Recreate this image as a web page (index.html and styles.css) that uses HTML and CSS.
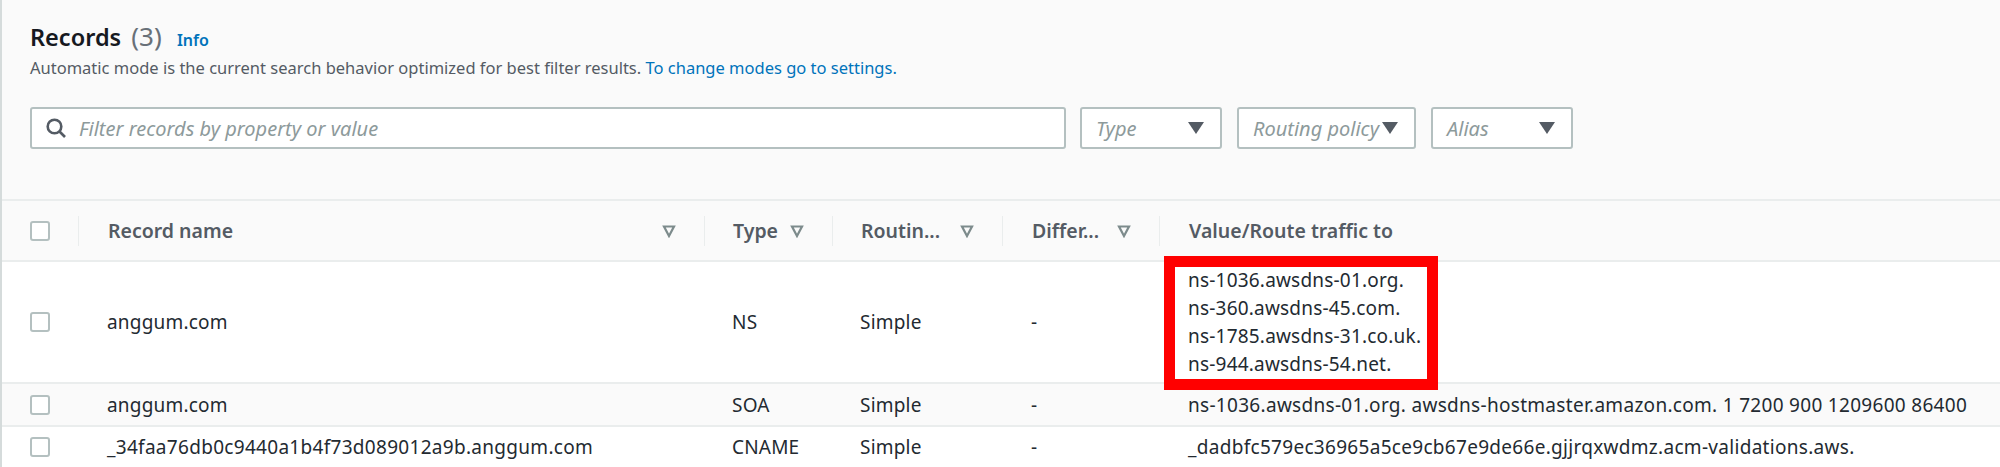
FILE: index.html
```html
<!DOCTYPE html>
<html lang="en">
    <head>
        <meta charset="UTF-8">
        <title>Records</title>
        <link rel="stylesheet" href="styles.css">
    </head>
    <body>
        <div class="panel">
            <div class="panel-top">
                <h2>Records <span class="count">(3)</span> <a class="info" href="#">Info</a></h2>
                <p class="hint">Automatic mode is the current search behavior optimized for best filter results. <a href="#">To change modes go to settings.</a></p>
                <div class="filters">
                    <div class="search">
                        <svg class="search-icon" viewBox="0 0 20 20"><circle cx="8.5" cy="8.5" r="6.8"/><path d="M13.5 13.5l5.5 5.5"/></svg>
                        <span>Filter records by property or value</span>
                    </div>
                    <div class="select select-type"><span>Type</span><i class="caret"></i></div>
                    <div class="select select-routing"><span>Routing policy</span><i class="caret"></i></div>
                    <div class="select select-alias"><span>Alias</span><i class="caret"></i></div>
                </div>
            </div>
            <table>
                <colgroup>
                    <col class="col-check"><col class="col-name"><col class="col-type"><col class="col-routing"><col class="col-diff"><col>
                </colgroup>
                <thead>
                    <tr>
                        <th><span class="check"></span></th>
                        <th><div class="head">Record name<svg class="sort" viewBox="0 0 14 14"><path d="M2 2.5h10L7 12z"/></svg></div></th>
                        <th><div class="head head-tight">Type<svg class="sort" viewBox="0 0 14 14"><path d="M2 2.5h10L7 12z"/></svg></div></th>
                        <th><div class="head head-tight">Routin...<svg class="sort" viewBox="0 0 14 14"><path d="M2 2.5h10L7 12z"/></svg></div></th>
                        <th><div class="head">Differ...<svg class="sort" viewBox="0 0 14 14"><path d="M2 2.5h10L7 12z"/></svg></div></th>
                        <th><div class="head">Value/Route traffic to</div></th>
                    </tr>
                </thead>
                <tbody>
                    <tr class="row-ns">
                        <td><span class="check"></span></td>
                        <td>anggum.com</td>
                        <td class="tight">NS</td>
                        <td class="tight">Simple</td>
                        <td>-</td>
                        <td class="multi">ns-1036.awsdns-01.org.<br>ns-360.awsdns-45.com.<br>ns-1785.awsdns-31.co.uk.<br>ns-944.awsdns-54.net.</td>
                    </tr>
                    <tr class="row-soa">
                        <td><span class="check"></span></td>
                        <td>anggum.com</td>
                        <td class="tight">SOA</td>
                        <td class="tight">Simple</td>
                        <td>-</td>
                        <td class="long">ns-1036.awsdns-01.org. awsdns-hostmaster.amazon.com. 1 7200 900 1209600 86400</td>
                    </tr>
                    <tr class="row-cname">
                        <td><span class="check"></span></td>
                        <td class="long">_34faa76db0c9440a1b4f73d089012a9b.anggum.com</td>
                        <td class="tight">CNAME</td>
                        <td class="tight">Simple</td>
                        <td>-</td>
                        <td class="long">_dadbfc579ec36965a5ce9cb67e9de66e.gjjrqxwdmz.acm-validations.aws.</td>
                    </tr>
                </tbody>
            </table>
            <div class="highlight"></div>
        </div>
    </body>
</html>
```

FILE: styles.css
```css
* {
    margin: 0;
    padding: 0;
    box-sizing: border-box;
}

html, body {
    height: 467px;
    overflow: hidden;
}

body {
    font-family: "Noto Sans", "Open Sans", sans-serif;
    font-size: 19px;
    color: #16191f;
    background: #fff;
}

a {
    color: #0073bb;
    text-decoration: none;
}

.panel {
    position: relative;
    height: 467px;
    border-left: 2px solid #d5dbdb;
    background: #fafafa;
}

.panel-top {
    height: 199px;
    padding: 20px 0 0 28px;
}

h2 {
    font-size: 23.5px;
    line-height: 32px;
    font-weight: 600;
    color: #16191f;
}

.count {
    font-size: 26px;
    font-weight: 400;
    margin-left: 4px;
    color: #687078;
}

.info {
    font-size: 16px;
    font-weight: 600;
    margin-left: 9px;
    color: #0073bb;
}

.hint {
    font-size: 16.5px;
    line-height: 24px;
    color: #545b64;
}

.filters {
    display: flex;
    height: 42px;
    margin-top: 27px;
}

.search, .select {
    display: flex;
    align-items: center;
    font-size: 20px;
    background: #fff;
    border: 2px solid #b4c0c0;
    border-radius: 3px;
    font-style: italic;
    color: #8d9a9b;
}

.search {
    width: 1036px;
    padding-left: 14px;
    margin-right: 14px;
}

.search-icon {
    width: 20px;
    height: 20px;
    margin-right: 13px;
    fill: none;
    stroke: #545b64;
    stroke-width: 2.6;
}

.select {
    justify-content: space-between;
    padding: 0 16px 0 14px;
    margin-right: 15px;
}

.select-type, .select-alias {
    width: 142px;
}

.select-routing {
    width: 179px;
}

.caret {
    flex: none;
    width: 0;
    height: 0;
    border-left: 8px solid transparent;
    border-right: 8px solid transparent;
    border-top: 12px solid #545b64;
}

table {
    width: 1998px;
    table-layout: fixed;
    border-collapse: separate;
    border-spacing: 0;
    border-top: 2px solid #eaeded;
}

.col-check {
    width: 76px;
}

.col-name {
    width: 626px;
}

.col-type {
    width: 128px;
}

.col-routing {
    width: 170px;
}

.col-diff {
    width: 157px;
}

th {
    height: 61px;
    padding: 0;
    text-align: left;
    font-size: 19.5px;
    font-weight: 600;
    color: #545b64;
    background: #fafafa;
    border-bottom: 2px solid #eaeded;
}

th:first-child, td:first-child {
    padding-left: 28px;
}

.head {
    display: flex;
    align-items: center;
    justify-content: space-between;
    height: 30px;
    padding: 0 28px 0 29px;
    border-left: 1px solid #eaeded;
}

.head-tight {
    padding-left: 28px;
}

.sort {
    flex: none;
    width: 14px;
    height: 14px;
    fill: none;
    stroke: #7d8b8c;
    stroke-width: 2.2;
}

td {
    padding: 0 0 0 29px;
    color: #232a31;
    letter-spacing: 0.2px;
    white-space: nowrap;
    border-bottom: 2px solid #eaeded;
    background: #fff;
}

td.tight {
    padding-left: 28px;
}

.row-ns td {
    height: 122px;
}

.row-soa td {
    height: 43px;
    background: #fafafa;
}

.row-cname td {
    height: 42px;
}

.multi {
    line-height: 28px;
}

.long {
    letter-spacing: 0.3px;
}

.check {
    display: block;
    width: 20px;
    height: 20px;
    background: #fff;
    border: 2px solid #b4c0c0;
    border-radius: 3px;
}

/* red box drawn over the NS values */
.highlight {
    position: absolute;
    left: 1162px;
    top: 256px;
    width: 274px;
    height: 134px;
    border: 11px solid #ff0000;
}
```
